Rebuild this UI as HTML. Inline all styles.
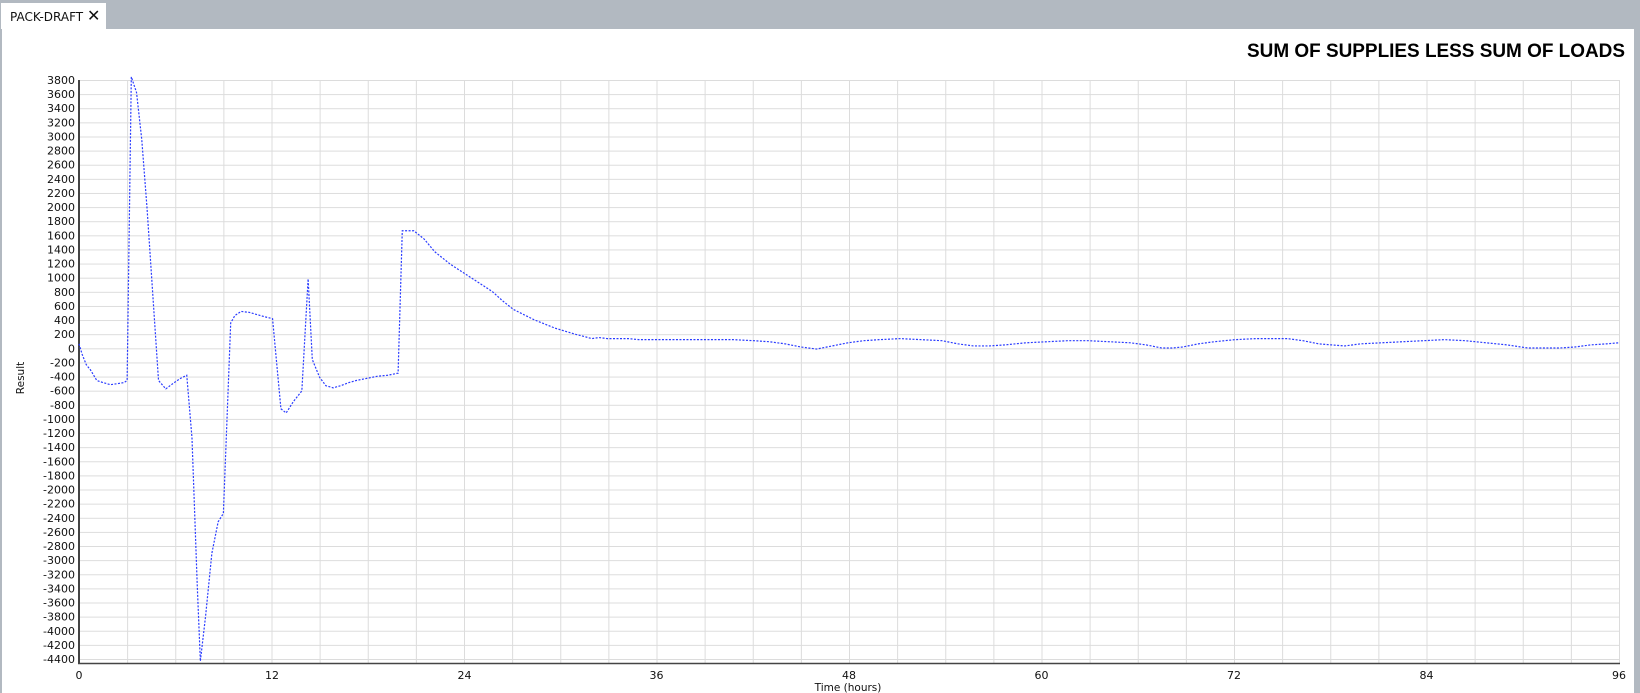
<!DOCTYPE html>
<html><head><meta charset="utf-8"><style>
html,body{margin:0;padding:0;width:1640px;height:693px;overflow:hidden;background:#fff;font-family:Tahoma,"DejaVu Sans","Liberation Sans",sans-serif}
.top{position:absolute;left:0;top:0;width:1640px;height:29px;background:#b2b9c1}
.tab{position:absolute;left:1px;top:3px;width:105px;height:27px;background:#fff;font-size:12px;color:#111}
.tab span{position:absolute;left:9px;top:7px}
.tab b{position:absolute;left:86px;top:3px;font-size:16px;font-weight:normal}
.lb{position:absolute;left:0;top:29px;width:2px;height:664px;background:#b2b9c1}
.rb{position:absolute;left:1634px;top:29px;width:6px;height:664px;background:#b2b9c1}
svg{position:absolute;left:0;top:0}
</style></head><body>
<div class="top"></div>
<div class="tab"><span>PACK-DRAFT</span><b>✕</b></div>
<div class="lb"></div><div class="rb"></div>
<svg width="1640" height="693" xmlns="http://www.w3.org/2000/svg">
<defs><pattern id="g" x="79" y="80" width="48.125" height="14.122" patternUnits="userSpaceOnUse">
<line x1="0.5" y1="0" x2="0.5" y2="14.122" stroke="#dcdcdc" stroke-width="1"/>
<line x1="0" y1="0.5" x2="48.125" y2="0.5" stroke="#dcdcdc" stroke-width="1"/>
</pattern></defs>
<rect x="79" y="80" width="1540" height="583" fill="url(#g)"/>
<line x1="1619.5" y1="80" x2="1619.5" y2="663" stroke="#dcdcdc"/>
<line x1="79" y1="80" x2="79" y2="664" stroke="#444" stroke-width="2"/>
<line x1="78" y1="663.5" x2="1620" y2="663.5" stroke="#444" stroke-width="1.5"/>
<text x="1625" y="57" font-size="19" font-weight="bold" text-anchor="end" fill="#000" font-family="'Liberation Sans',Arial,sans-serif" textLength="378" lengthAdjust="spacingAndGlyphs">SUM OF SUPPLIES LESS SUM OF LOADS</text>
<g font-size="11" fill="#111" text-anchor="end">
<text x="75" y="84">3800</text><text x="75" y="98.1">3600</text><text x="75" y="112.2">3400</text><text x="75" y="126.4">3200</text><text x="75" y="140.5">3000</text><text x="75" y="154.6">2800</text><text x="75" y="168.7">2600</text><text x="75" y="182.9">2400</text><text x="75" y="197">2200</text><text x="75" y="211.1">2000</text><text x="75" y="225.2">1800</text><text x="75" y="239.3">1600</text><text x="75" y="253.5">1400</text><text x="75" y="267.6">1200</text><text x="75" y="281.7">1000</text><text x="75" y="295.8">800</text><text x="75" y="310">600</text><text x="75" y="324.1">400</text><text x="75" y="338.2">200</text><text x="75" y="352.3">0</text><text x="75" y="366.4">-200</text><text x="75" y="380.6">-400</text><text x="75" y="394.7">-600</text><text x="75" y="408.8">-800</text><text x="75" y="422.9">-1000</text><text x="75" y="437.1">-1200</text><text x="75" y="451.2">-1400</text><text x="75" y="465.3">-1600</text><text x="75" y="479.4">-1800</text><text x="75" y="493.5">-2000</text><text x="75" y="507.7">-2200</text><text x="75" y="521.8">-2400</text><text x="75" y="535.9">-2600</text><text x="75" y="550">-2800</text><text x="75" y="564.1">-3000</text><text x="75" y="578.3">-3200</text><text x="75" y="592.4">-3400</text><text x="75" y="606.5">-3600</text><text x="75" y="620.6">-3800</text><text x="75" y="634.8">-4000</text><text x="75" y="648.9">-4200</text><text x="75" y="663">-4400</text>
</g>
<g font-size="11" fill="#111" text-anchor="middle">
<text x="79" y="679">0</text><text x="272" y="679">12</text><text x="464.5" y="679">24</text><text x="656.5" y="679">36</text><text x="849" y="679">48</text><text x="1041.5" y="679">60</text><text x="1234" y="679">72</text><text x="1426.5" y="679">84</text><text x="1619" y="679">96</text>
<text x="848" y="691" font-size="10.5">Time (hours)</text>
</g>
<text transform="translate(24,378) rotate(-90)" font-size="10.5" text-anchor="middle" fill="#111">Result</text>
<g transform="translate(79,80) scale(1.0462,1.047) translate(-75,-78)">
<polyline fill="none" stroke="#2a3cff" stroke-width="1.2" stroke-dasharray="2,1.5" vector-effect="non-scaling-stroke"
points="75,330 78,340 82,350 86,355 92,365 98,367 105,369 112,368 118,367 121,365 125,75 130,90 135,135 140,200 146,290 151,365 158,373 166,367 172,363 178,360 183,420 188,560 191,633 196,590 202,530 208,500 213,492 220,310 224,303 230,299 238,300 245,302 252,304 260,306 268,392 273,396 280,385 288,375 294,268 298,345 305,362 311,370 318,372 325,370 333,367 340,365 350,363 360,361 370,360 380,358 384,222 395,222 405,230 415,242 430,254 450,267 470,280 480,289 490,297 500,302 510,307 520,311 530,315 540,318 550,321 558,323 565,325 572,324 580,325 590,325 600,325 610,326 620,326 640,326 660,326 680,326 700,326 720,327 735,328 750,330 765,333 780,335 795,332 810,329 825,327 840,326 860,325 880,326 900,327 915,330 930,332 945,332 960,331 980,329 1000,328 1020,327 1040,327 1060,328 1080,329 1095,331 1110,334 1120,334 1130,333 1145,330 1160,328 1180,326 1200,325 1215,325 1230,325 1245,327 1260,330 1272,331 1285,332 1300,330 1320,329 1340,328 1360,327 1380,326 1400,327 1420,329 1440,331 1460,334 1475,334 1490,334 1505,333 1520,331 1535,330 1547,329"/>
</g>
</svg>
</body></html>
